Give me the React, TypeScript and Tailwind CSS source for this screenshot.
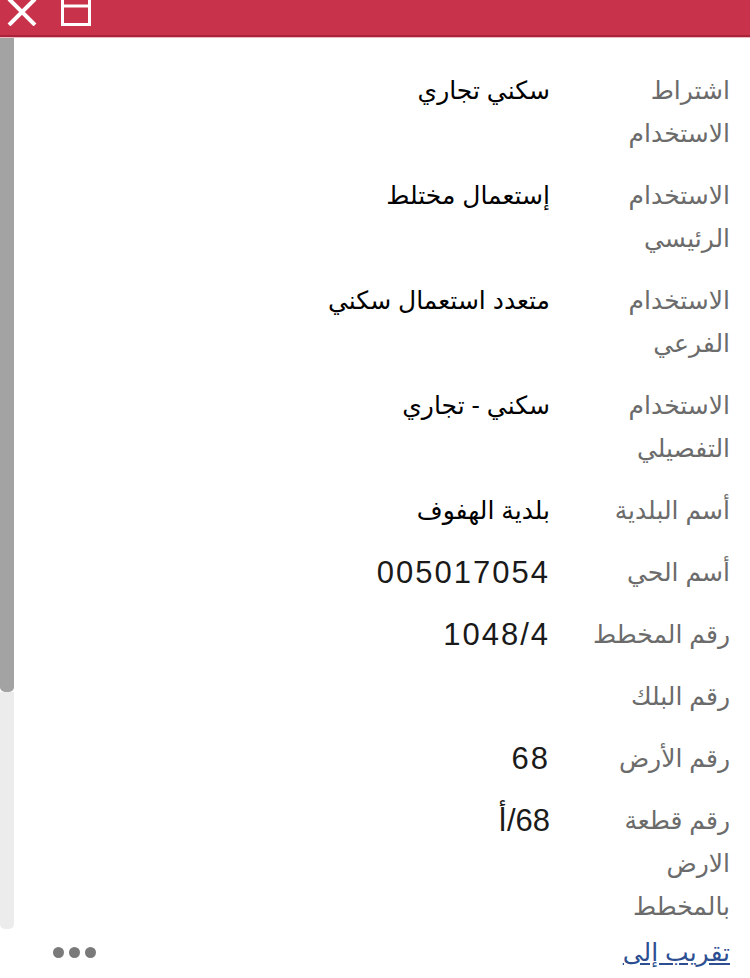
import React from "react";

const rows: { label: string; value?: string; num?: boolean }[] = [
  { label: "اشتراط الاستخدام", value: "سكني تجاري" },
  { label: "الاستخدام الرئيسي", value: "إستعمال مختلط" },
  { label: "الاستخدام الفرعي", value: "متعدد استعمال سكني" },
  { label: "الاستخدام التفصيلي", value: "سكني - تجاري" },
  { label: "أسم البلدية", value: "بلدية الهفوف" },
  { label: "أسم الحي", value: "005017054", num: true },
  { label: "رقم المخطط", value: "1048/4", num: true },
  { label: "رقم البلك" },
  { label: "رقم الأرض", value: "68", num: true },
  { label: "رقم قطعة الارض بالمخطط", value: "68/أ", num: true },
];

export default function App() {
  return (
    <div
      className="w-[750px] h-[978px] bg-white flex flex-col overflow-hidden"
      style={{ fontFamily: '"Liberation Sans", "DejaVu Sans", sans-serif' }}
    >
      {/* header */}
      <div className="h-[37px] shrink-0 bg-[#c8324a] border-b-[2px] border-[#a8243a] flex items-start gap-[22px] pl-[6px] overflow-hidden">
        <svg width="32" height="27" viewBox="0 0 32 27" className="mt-[-1px]">
          <path d="M3 0 L29 26 M29 0 L3 26" stroke="#fff" strokeWidth="4" fill="none" />
        </svg>
        <svg width="32" height="27" viewBox="0 0 32 27" className="mt-[-1px]">
          <rect x="2.5" y="-2" width="27" height="27.5" stroke="#fff" strokeWidth="3" fill="none" />
          <path d="M2 7 H30" stroke="#fff" strokeWidth="3" />
        </svg>
      </div>
      <div className="h-[1px] shrink-0 bg-[#efb6bf]" />

      {/* scroll region */}
      <div className="flex h-[891px] shrink-0">
        <div className="w-[14px] shrink-0 flex flex-col">
          <div className="h-[654px] bg-[#a3a3a3] rounded-b-[5px]" />
          <div className="flex-1 bg-[#ececec] rounded-b-[5px]" />
        </div>
        <div dir="rtl" className="flex-1 pr-[20px] pt-[21px] overflow-hidden">
          {rows.map((r, i) => (
            <div key={i} className="flex items-start py-[9.5px] leading-[43px]">
              <div className="w-[180px] shrink-0 pl-[20px] text-[#6b6b6b] text-[25px]">
                {r.label}
              </div>
              <div
                className={
                  r.num
                    ? "text-[#1a1a1a] text-[31px] tracking-[2px]"
                    : "text-[#000] text-[25px] font-medium"
                }
              >
                {r.value ?? ""}
              </div>
            </div>
          ))}
        </div>
      </div>

      {/* footer */}
      <div className="flex-1 flex items-center justify-between pl-[53px] pr-[20px] pb-[2px]">
        <div className="flex gap-[5px]">
          <span className="w-[11px] h-[11px] rounded-full bg-[#7a7a7a]" />
          <span className="w-[11px] h-[11px] rounded-full bg-[#7a7a7a]" />
          <span className="w-[11px] h-[11px] rounded-full bg-[#7a7a7a]" />
        </div>
        <a dir="rtl" className="text-[#2d4f92] text-[25px] underline">
          تقريب إلى
        </a>
      </div>
    </div>
  );
}
